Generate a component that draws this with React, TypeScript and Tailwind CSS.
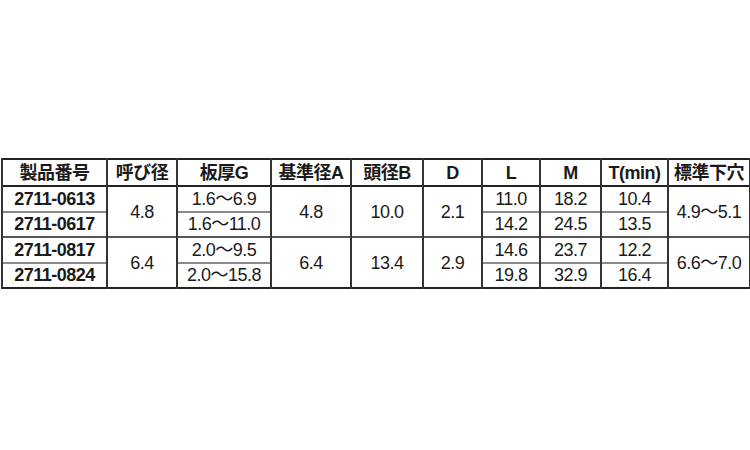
import React from 'react';

const font = { fontFamily: '"Liberation Sans", "Noto Sans CJK JP", sans-serif' };

const headers = ['製品番号', '呼び径', '板厚G', '基準径A', '頭径B', 'D', 'L', 'M', 'T(min)', '標準下穴'];

const groups = [
  {
    size: '4.8',
    a: '4.8',
    b: '10.0',
    d: '2.1',
    hole: '4.9〜5.1',
    rows: [
      { no: '2711-0613', g: '1.6〜6.9', l: '11.0', m: '18.2', t: '10.4' },
      { no: '2711-0617', g: '1.6〜11.0', l: '14.2', m: '24.5', t: '13.5' },
    ],
  },
  {
    size: '6.4',
    a: '6.4',
    b: '13.4',
    d: '2.9',
    hole: '6.6〜7.0',
    rows: [
      { no: '2711-0817', g: '2.0〜9.5', l: '14.6', m: '23.7', t: '12.2' },
      { no: '2711-0824', g: '2.0〜15.8', l: '19.8', m: '32.9', t: '16.4' },
    ],
  },
];

const cell = 'border-x-2 border-x-[#333] text-center align-middle p-0';

export default function App() {
  return (
    <div className="w-[750px] h-[450px] bg-white pt-[158px] pl-[1px]" style={font}>
      <table className="table-fixed border-collapse border-2 border-[#222] text-[18px] tracking-[-0.5px] leading-none text-[#1a1a1a] w-[748px]">
        <colgroup>
          <col className="w-[105px]" />
          <col className="w-[70px]" />
          <col className="w-[94px]" />
          <col className="w-[80px]" />
          <col className="w-[72px]" />
          <col className="w-[59px]" />
          <col className="w-[58px]" />
          <col className="w-[61px]" />
          <col className="w-[67px]" />
          <col className="w-[82px]" />
        </colgroup>
        <thead>
          <tr className="h-[27px] border-b-2 border-[#222]">
            {headers.map((h) => (
              <th key={h} className={`${cell} font-bold`}>
                {h}
              </th>
            ))}
          </tr>
        </thead>
        <tbody>
          {groups.map((grp, gi) =>
            grp.rows.map((r, ri) => (
              <tr
                key={r.no}
                className={`h-[25.5px] ${ri === 0 && gi > 0 ? 'border-t-2 border-t-[#555]' : ''} ${ri === 1 ? 'border-t-2 border-t-[#8a8a8a]' : ''}`}
              >
                <td className={`${cell} font-bold`}>{r.no}</td>
                {ri === 0 && (
                  <td rowSpan={2} className={cell}>
                    {grp.size}
                  </td>
                )}
                <td className={cell}>{r.g}</td>
                {ri === 0 && (
                  <>
                    <td rowSpan={2} className={cell}>
                      {grp.a}
                    </td>
                    <td rowSpan={2} className={cell}>
                      {grp.b}
                    </td>
                    <td rowSpan={2} className={cell}>
                      {grp.d}
                    </td>
                  </>
                )}
                <td className={cell}>{r.l}</td>
                <td className={cell}>{r.m}</td>
                <td className={cell}>{r.t}</td>
                {ri === 0 && (
                  <td rowSpan={2} className={cell}>
                    {grp.hole}
                  </td>
                )}
              </tr>
            ))
          )}
        </tbody>
      </table>
    </div>
  );
}
